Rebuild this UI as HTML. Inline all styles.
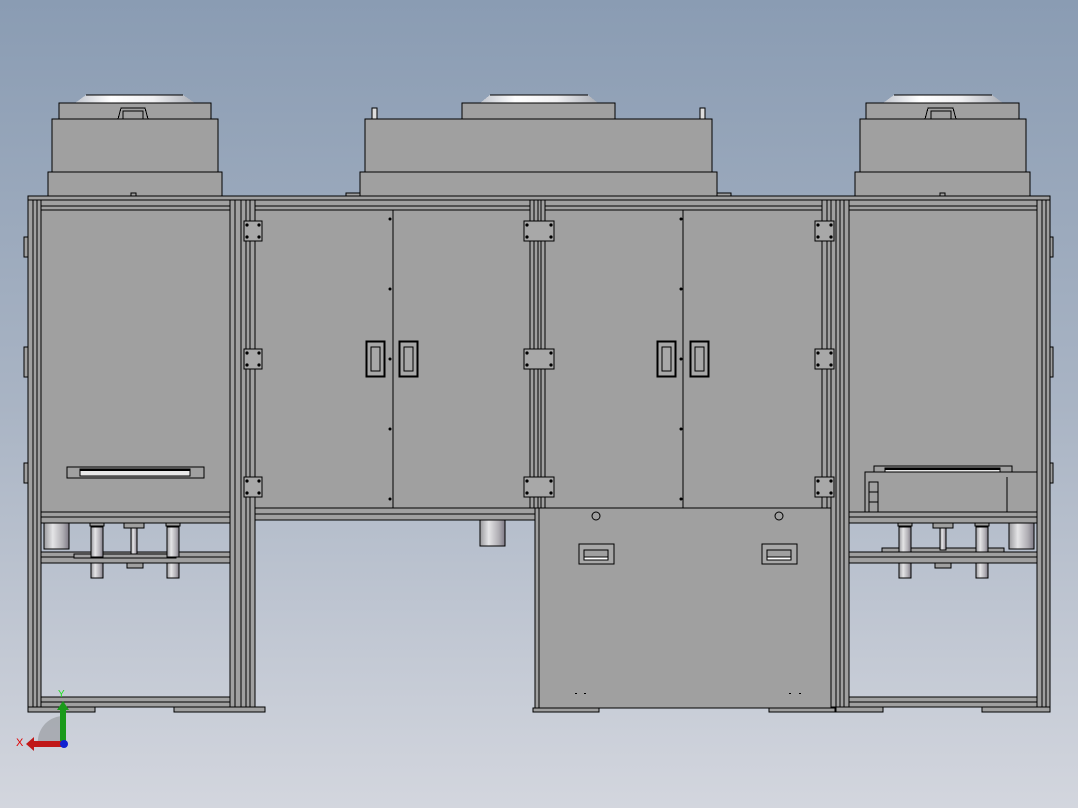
<!DOCTYPE html>
<html><head><meta charset="utf-8"><style>
html,body{margin:0;padding:0;width:1078px;height:808px;overflow:hidden}
svg{display:block}
</style></head><body>
<svg width="1078" height="808" viewBox="0 0 1078 808" xmlns="http://www.w3.org/2000/svg">
<defs>
<linearGradient id="bg" x1="0" y1="0" x2="0" y2="1">
<stop offset="0" stop-color="#8a9cb3"/><stop offset="0.5" stop-color="#a9b4c4"/><stop offset="1" stop-color="#d3d6de"/>
</linearGradient>
<linearGradient id="fan" x1="0" y1="0" x2="1" y2="0">
<stop offset="0" stop-color="#c0c4cc"/><stop offset="0.3" stop-color="#ffffff"/><stop offset="0.65" stop-color="#f0f0f2"/><stop offset="1" stop-color="#a8acb4"/>
</linearGradient>
<linearGradient id="cyl" x1="0" y1="0" x2="1" y2="0">
<stop offset="0" stop-color="#9a9a9e"/><stop offset="0.35" stop-color="#e4e4e6"/><stop offset="0.75" stop-color="#b0aeb4"/><stop offset="1" stop-color="#7e7a86"/>
</linearGradient>
</defs>
<rect width="1078" height="808" fill="url(#bg)"/>
<g stroke="#000" stroke-width="1" fill="#a0a0a0" shape-rendering="crispEdges">
<!-- left tower top -->
<polygon points="86,95 183,95 195,103 75,103" fill="url(#fan)" stroke="none"/><line x1="86" y1="95" x2="183" y2="95"/>
<rect x="59" y="103" width="152" height="16"/>
<path d="M118,119 L121,108 L145,108 L148,119 M123,119 L123,111 L143,111 L143,119" fill="none"/>
<rect x="52" y="119" width="166" height="53"/>
<rect x="48" y="172" width="174" height="24"/>
<rect x="131" y="193" width="5" height="3"/>
<!-- middle top -->
<polygon points="490,95 588,95 598,103 480,103" fill="url(#fan)" stroke="none"/><line x1="490" y1="95" x2="588" y2="95"/>
<rect x="462" y="103" width="153" height="16"/>
<rect x="372" y="108" width="5" height="11" fill="#ddd"/><rect x="700" y="108" width="5" height="11" fill="#ddd"/>
<rect x="365" y="119" width="347" height="53"/>
<rect x="360" y="172" width="357" height="25"/>
<rect x="346" y="193" width="14" height="3"/><rect x="717" y="193" width="14" height="3"/>
<!-- right top -->
<polygon points="894,95 992,95 1003,103 883,103" fill="url(#fan)" stroke="none"/><line x1="894" y1="95" x2="992" y2="95"/>
<rect x="866" y="103" width="153" height="16"/>
<path d="M925,119 L928,108 L953,108 L956,119 M931,119 L931,111 L951,111 L951,119" fill="none"/>
<rect x="860" y="119" width="166" height="53"/>
<rect x="855" y="172" width="175" height="25"/>
<rect x="940" y="193" width="5" height="3"/>
<!-- top frame bars -->
<rect x="28" y="196" width="1022" height="4"/>
<rect x="28" y="200" width="1022" height="6"/>
<rect x="28" y="206" width="1022" height="4"/>

<!-- left cabinet -->
<rect x="41" y="210" width="189" height="302"/>
<rect x="41" y="512" width="189" height="5"/><rect x="41" y="517" width="189" height="6"/>
<rect x="41" y="552" width="189" height="5"/><rect x="41" y="557" width="189" height="6"/>
<rect x="41" y="697" width="189" height="5"/><rect x="41" y="702" width="189" height="5"/>
<rect x="28" y="707" width="67" height="5"/><rect x="174" y="707" width="91" height="5"/>
<rect x="28" y="200" width="5" height="507"/><rect x="33" y="200" width="4" height="507"/><rect x="37" y="200" width="4" height="507"/>
<rect x="230" y="200" width="5" height="507"/><rect x="235" y="200" width="6" height="507"/>
<rect x="241" y="200" width="5" height="507"/><rect x="246" y="200" width="4" height="507"/><rect x="250" y="200" width="5" height="507"/>
<rect x="24" y="237" width="4" height="20"/><rect x="24" y="347" width="4" height="30"/><rect x="24" y="463" width="4" height="20"/>
<!-- left fan tray -->
<rect x="67" y="467" width="137" height="11"/>
<rect x="80" y="469" width="110" height="7" fill="#e8e8e8"/>
<line x1="80" y1="470" x2="190" y2="470" stroke-width="2"/>
<!-- left cylinder & legs -->
<rect x="44" y="523" width="25" height="26" fill="url(#cyl)"/>
<rect x="74" y="554" width="102" height="4"/>
<rect x="90" y="523" width="14" height="3"/><rect x="166" y="523" width="14" height="3"/><rect x="124" y="523" width="20" height="5"/>
<rect x="91" y="527" width="12" height="30" fill="url(#cyl)"/>
<rect x="167" y="527" width="12" height="30" fill="url(#cyl)"/>
<rect x="131" y="528" width="6" height="26" fill="url(#cyl)"/>
<rect x="91" y="563" width="12" height="15" fill="url(#cyl)"/>
<rect x="167" y="563" width="12" height="15" fill="url(#cyl)"/>
<rect x="127" y="563" width="16" height="5"/>

<!-- middle upper panel -->
<rect x="255" y="210" width="275" height="298"/>
<rect x="545" y="210" width="277" height="298"/>
<line x1="393" y1="210" x2="393" y2="508"/><line x1="683" y1="210" x2="683" y2="508"/>
<rect x="530" y="200" width="4" height="308"/><rect x="534" y="200" width="4" height="308"/><rect x="538" y="200" width="3" height="308"/><rect x="541" y="200" width="4" height="308"/>
<rect x="255" y="508" width="280" height="6"/><rect x="255" y="514" width="280" height="6"/>
<rect x="480" y="520" width="25" height="26" fill="url(#cyl)"/>
<rect x="822" y="200" width="5" height="308"/><rect x="827" y="200" width="4" height="308"/><rect x="831" y="200" width="5" height="507"/>
<!-- handles -->
<g fill="#a8a8a8">
<rect x="366" y="341" width="19" height="36"/><rect x="367" y="342" width="17" height="34" fill="none"/><rect x="371" y="347" width="9" height="24"/>
<rect x="399" y="341" width="19" height="36"/><rect x="400" y="342" width="17" height="34" fill="none"/><rect x="404" y="347" width="9" height="24"/>
<rect x="657" y="341" width="19" height="36"/><rect x="658" y="342" width="17" height="34" fill="none"/><rect x="662" y="347" width="9" height="24"/>
<rect x="690" y="341" width="19" height="36"/><rect x="691" y="342" width="17" height="34" fill="none"/><rect x="695" y="347" width="9" height="24"/>
</g>
<!-- hinges -->
<g fill="#a8a8a8">
<rect x="244" y="221" width="18" height="20"/><rect x="244" y="349" width="18" height="20"/><rect x="244" y="477" width="18" height="20"/>
<rect x="524" y="221" width="30" height="20"/><rect x="524" y="349" width="30" height="20"/><rect x="524" y="477" width="30" height="20"/>
<rect x="815" y="221" width="19" height="20"/><rect x="815" y="349" width="19" height="20"/><rect x="815" y="477" width="19" height="20"/>
</g>
</g>
<g fill="#000">
<circle cx="247" cy="225" r="1.6"/><circle cx="259" cy="225" r="1.6"/><circle cx="247" cy="237" r="1.6"/><circle cx="259" cy="237" r="1.6"/>
<circle cx="247" cy="353" r="1.6"/><circle cx="259" cy="353" r="1.6"/><circle cx="247" cy="365" r="1.6"/><circle cx="259" cy="365" r="1.6"/>
<circle cx="247" cy="481" r="1.6"/><circle cx="259" cy="481" r="1.6"/><circle cx="247" cy="493" r="1.6"/><circle cx="259" cy="493" r="1.6"/>
<circle cx="527" cy="225" r="1.6"/><circle cx="551" cy="225" r="1.6"/><circle cx="527" cy="237" r="1.6"/><circle cx="551" cy="237" r="1.6"/>
<circle cx="527" cy="353" r="1.6"/><circle cx="551" cy="353" r="1.6"/><circle cx="527" cy="365" r="1.6"/><circle cx="551" cy="365" r="1.6"/>
<circle cx="527" cy="481" r="1.6"/><circle cx="551" cy="481" r="1.6"/><circle cx="527" cy="493" r="1.6"/><circle cx="551" cy="493" r="1.6"/>
<circle cx="818" cy="225" r="1.6"/><circle cx="831" cy="225" r="1.6"/><circle cx="818" cy="237" r="1.6"/><circle cx="831" cy="237" r="1.6"/>
<circle cx="818" cy="353" r="1.6"/><circle cx="831" cy="353" r="1.6"/><circle cx="818" cy="365" r="1.6"/><circle cx="831" cy="365" r="1.6"/>
<circle cx="818" cy="481" r="1.6"/><circle cx="831" cy="481" r="1.6"/><circle cx="818" cy="493" r="1.6"/><circle cx="831" cy="493" r="1.6"/>
<circle cx="390" cy="219" r="1.5"/><circle cx="390" cy="289" r="1.5"/><circle cx="390" cy="359" r="1.5"/><circle cx="390" cy="429" r="1.5"/><circle cx="390" cy="499" r="1.5"/>
<circle cx="681" cy="219" r="1.5"/><circle cx="681" cy="289" r="1.5"/><circle cx="681" cy="359" r="1.5"/><circle cx="681" cy="429" r="1.5"/><circle cx="681" cy="499" r="1.5"/>
</g>
<g stroke="#000" stroke-width="1" fill="#a0a0a0" shape-rendering="crispEdges">
<!-- lower central cabinet -->
<rect x="535" y="508" width="4" height="200"/>
<rect x="539" y="508" width="292" height="200"/>
<rect x="533" y="708" width="66" height="4"/><rect x="769" y="708" width="66" height="4"/>
<rect x="579" y="544" width="35" height="20" fill="#a8a8a8"/><rect x="584" y="550" width="24" height="10" fill="#fff"/><rect x="584" y="550" width="24" height="7"/>
<rect x="762" y="544" width="35" height="20" fill="#a8a8a8"/><rect x="767" y="550" width="24" height="10" fill="#fff"/><rect x="767" y="550" width="24" height="7"/>
<circle cx="596" cy="516" r="4" shape-rendering="auto"/><circle cx="779" cy="516" r="4" shape-rendering="auto"/>

<!-- right cabinet -->
<rect x="849" y="210" width="188" height="302"/>
<rect x="849" y="512" width="188" height="5"/><rect x="849" y="517" width="188" height="6"/>
<rect x="849" y="552" width="188" height="5"/><rect x="849" y="557" width="188" height="6"/>
<rect x="849" y="697" width="188" height="5"/><rect x="849" y="702" width="188" height="5"/>
<rect x="836" y="707" width="47" height="5"/><rect x="982" y="707" width="68" height="5"/>
<rect x="836" y="200" width="4" height="507"/><rect x="840" y="200" width="4" height="507"/><rect x="844" y="200" width="5" height="507"/>
<rect x="1037" y="200" width="5" height="507"/><rect x="1042" y="200" width="4" height="507"/><rect x="1046" y="200" width="4" height="507"/>
<rect x="1050" y="237" width="3" height="20"/><rect x="1050" y="347" width="3" height="30"/><rect x="1050" y="463" width="3" height="20"/>
<rect x="874" y="466" width="138" height="11"/>
<rect x="885" y="468" width="115" height="7" fill="#e8e8e8"/>
<line x1="885" y1="469" x2="1000" y2="469" stroke-width="2"/>
<rect x="865" y="472" width="172" height="40" fill="#a0a0a0"/>
<rect x="869" y="482" width="9" height="30"/><line x1="869" y1="492" x2="878" y2="492"/><line x1="869" y1="502" x2="878" y2="502"/>
<line x1="1007" y1="477" x2="1007" y2="512"/>
<rect x="1009" y="523" width="25" height="26" fill="url(#cyl)"/>
<rect x="882" y="548" width="122" height="4"/>
<rect x="898" y="523" width="14" height="3"/><rect x="975" y="523" width="14" height="3"/><rect x="933" y="523" width="20" height="5"/>
<rect x="899" y="527" width="12" height="25" fill="url(#cyl)"/>
<rect x="976" y="527" width="12" height="25" fill="url(#cyl)"/>
<rect x="940" y="528" width="6" height="22" fill="url(#cyl)"/>
<rect x="899" y="563" width="12" height="15" fill="url(#cyl)"/>
<rect x="976" y="563" width="12" height="15" fill="url(#cyl)"/>
<rect x="935" y="563" width="16" height="5"/>
</g>
<g fill="#000">
<rect x="575" y="693" width="2" height="1"/><rect x="584" y="693" width="2" height="1"/>
<rect x="789" y="693" width="2" height="1"/><rect x="799" y="693" width="2" height="1"/>
</g>
<!-- axis triad -->
<path d="M38,745 A26,26 0 0 1 62,716 L62,745 Z" fill="#9a9ca2" opacity="0.7"/>
<rect x="60" y="707" width="6" height="35" fill="#1a9a1a"/>
<polygon points="57,710 63,701 69,710" fill="#1a9a1a"/>
<rect x="32" y="741" width="32" height="6" fill="#c01818"/>
<polygon points="34,737 26,744 34,751" fill="#c01818"/>
<circle cx="64" cy="744" r="4" fill="#1020d0"/>
<text x="16" y="746" font-family="Liberation Sans, sans-serif" font-size="11" fill="#e00000">X</text>
<text x="58" y="697" font-family="Liberation Sans, sans-serif" font-size="10" fill="#20e020">Y</text>
</svg>
</body></html>
